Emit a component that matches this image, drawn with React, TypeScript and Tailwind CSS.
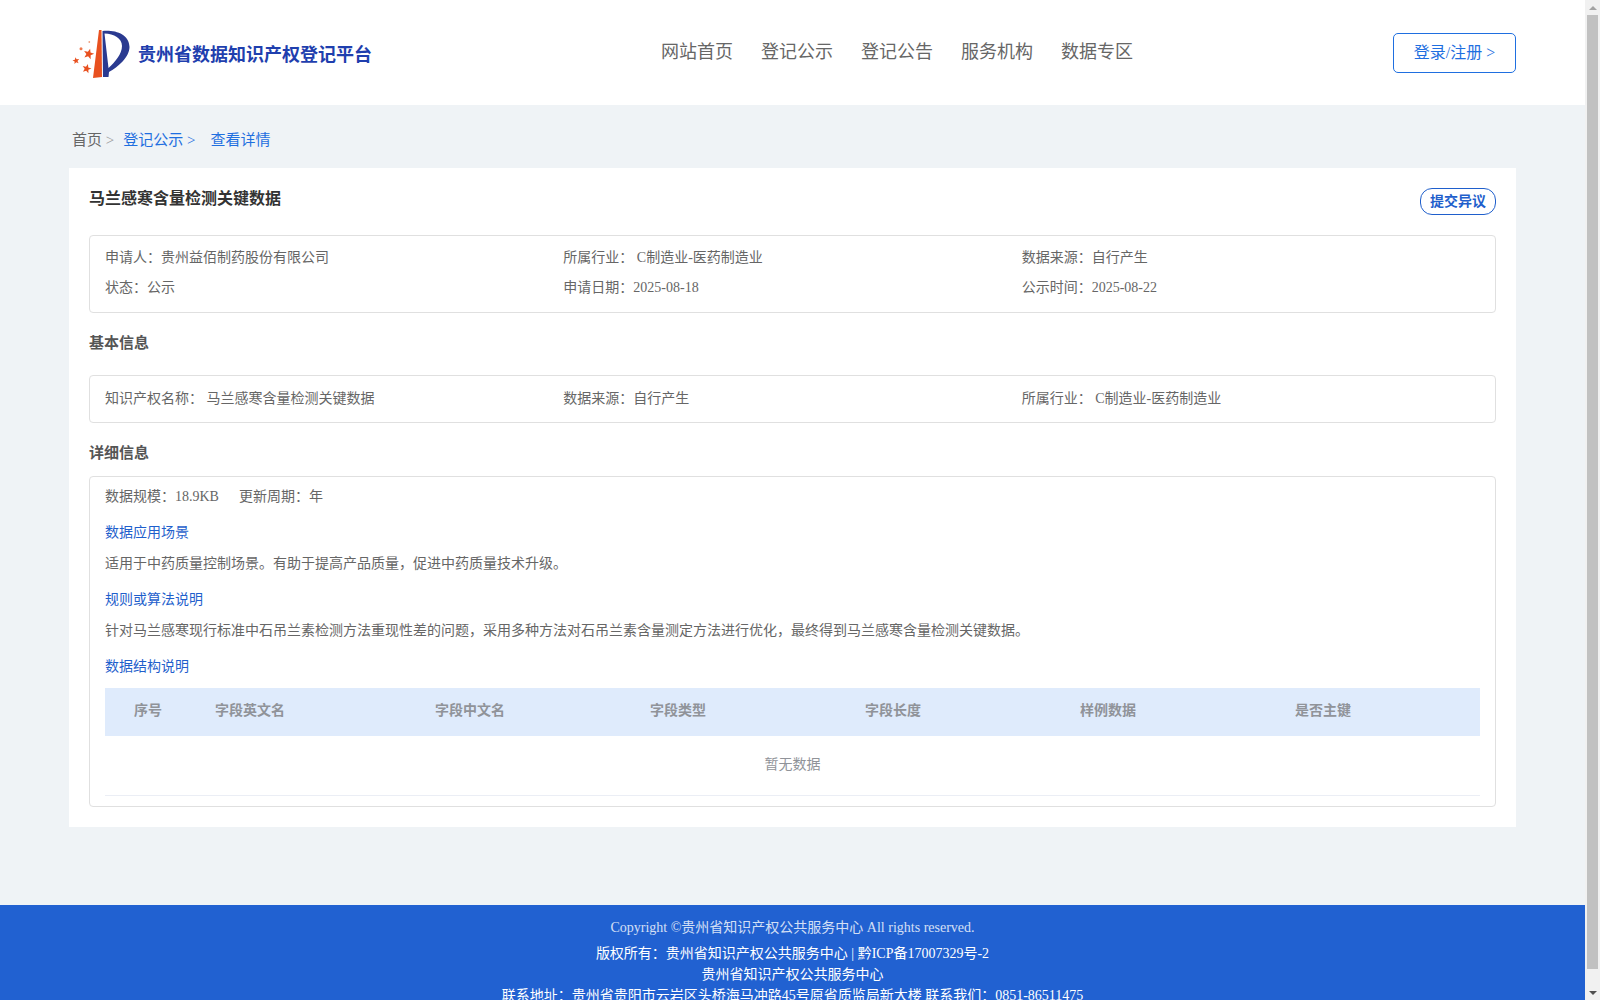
const navItems = ["网站首页", "登记公示", "登记公告", "服务机构", "数据专区"];
const tableColumns = ["字段英文名", "字段中文名", "字段类型", "字段长度", "样例数据", "是否主键"];

function starPoints(cx: number, cy: number, r: number, tilt: number) {
  const pts: string[] = [];
  for (let i = 0; i < 10; i++) {
    const radius = i % 2 === 0 ? r : r * 0.42;
    const a = ((-90 + tilt + i * 36) * Math.PI) / 180;
    pts.push(`${(cx + radius * Math.cos(a)).toFixed(2)},${(cy + radius * Math.sin(a)).toFixed(2)}`);
  }
  return pts.join(" ");
}

function Logo() {
  return (
    <svg width="70" height="60" viewBox="0 0 70 60" className="shrink-0">
      <path d="M33 7 L35.5 7 L36 54 L27 55 Z" fill="#e8501f" />
      <path
        fillRule="evenodd"
        d="M36.5 8 C50 7 63 11 63.5 24 C63.5 34 52 44 43 49 L42.5 54 L37 54 Z M38.5 10.5 C48 11 56 15 56 23 C56 31 49 39 42.5 45 Z"
        fill="#2a3a90"
      />
      <polygon points={starPoints(22.7, 31, 5.5, 15)} fill="#e8501f" />
      <polygon points={starPoints(10, 37.7, 3.6, -10)} fill="#e8501f" />
      <polygon points={starPoints(20.7, 45.7, 4.8, 15)} fill="#e8501f" />
      <circle cx="15" cy="25.7" r="1.5" fill="#ef7a50" />
      <circle cx="23.3" cy="19" r="0.9" fill="#f0a080" />
    </svg>
  );
}

function Field({ label, value }: { label: string; value: string }) {
  return (
    <div className="text-sm text-[#666]">
      {label}：{value}
    </div>
  );
}

function Scrollbar() {
  return (
    <div className="flex w-[15px] shrink-0 flex-col items-center bg-[#f1f1f1]">
      <div className="flex h-[15px] items-center justify-center">
        <div className="h-0 w-0 border-x-[4px] border-b-[4px] border-x-transparent border-b-[#a3a3a3]" />
      </div>
      <div className="h-[954px] w-[11px] bg-[#c1c1c1]" />
      <div className="mt-auto flex h-[15px] items-center justify-center">
        <div className="h-0 w-0 border-x-[4px] border-t-[4px] border-x-transparent border-t-[#505050]" />
      </div>
    </div>
  );
}

export default function App() {
  return (
    <div className="flex h-screen overflow-hidden bg-[#eff3f6] font-['Liberation_Serif','Noto_Sans_CJK_SC',serif] text-[#666]">
      <div className="w-[1585px] shrink-0 overflow-hidden">
        <header className="flex h-[105px] items-center bg-white pl-[66px] pr-[69px]">
          <div className="flex w-[526px] items-center gap-[2px]">
            <Logo />
            <span className="pt-[4px] text-lg font-bold text-[#1f3fae]">贵州省数据知识产权登记平台</span>
          </div>
          <nav className="ml-[69px] flex gap-[28px] pb-[2px] text-lg text-[#666]">
            {navItems.map((item) => (
              <a key={item}>{item}</a>
            ))}
          </nav>
          <button className="ml-auto h-10 w-[123px] rounded-[5px] border border-[#1f6fe0] text-base text-[#1f6fe0]">
            登录/注册 &gt;
          </button>
        </header>

        <div className="flex h-[63px] items-center pl-[72px] pt-[8px] text-[15px]">
          <span>首页 <span className="text-[#999]">&gt;</span></span>
          <span className="ml-[9px] text-[#1f6fe0]">登记公示 &gt;</span>
          <span className="ml-[15px] text-[#1f6fe0]">查看详情</span>
        </div>

        <main className="mx-[69px] h-[659px] bg-white px-[20px] pt-[20px]">
          <div className="flex h-[47px] items-start justify-between">
            <h1 className="text-base leading-[22px] font-bold text-[#333]">马兰感寒含量检测关键数据</h1>
            <button className="h-[27px] w-[76px] rounded-[12px] border border-[#1f5fcc] text-sm font-bold text-[#1f5fcc]">
              提交异议
            </button>
          </div>

          <div className="grid h-[78px] grid-cols-3 content-center gap-y-[10px] rounded border border-[#e0e0e0] px-[15px] pb-[2px] leading-5">
            <Field label="申请人" value="贵州益佰制药股份有限公司" />
            <Field label="所属行业" value=" C制造业-医药制造业" />
            <Field label="数据来源" value="自行产生" />
            <Field label="状态" value="公示" />
            <Field label="申请日期" value="2025-08-18" />
            <Field label="公示时间" value="2025-08-22" />
          </div>

          <h2 className="flex h-[62px] items-center pb-[2px] text-[15px] font-bold text-[#555]">基本信息</h2>

          <div className="grid h-[48px] grid-cols-3 items-center rounded border border-[#e0e0e0] px-[15px]">
            <Field label="知识产权名称" value=" 马兰感寒含量检测关键数据" />
            <Field label="数据来源" value="自行产生" />
            <Field label="所属行业" value=" C制造业-医药制造业" />
          </div>

          <h2 className="flex h-[53px] items-center pt-[7px] text-[15px] font-bold text-[#555]">详细信息</h2>

          <div className="h-[331px] rounded border border-[#e0e0e0] px-[15px] text-sm leading-5">
            <div className="flex gap-5 pt-[10px]">
              <span>数据规模：18.9KB</span>
              <span>更新周期：年</span>
            </div>
            <p className="mt-[16px] text-[#1f5fcc]">数据应用场景</p>
            <p className="mt-[11px]">适用于中药质量控制场景。有助于提高产品质量，促进中药质量技术升级。</p>
            <p className="mt-[16px] text-[#1f5fcc]">规则或算法说明</p>
            <p className="mt-[11px]">
              针对马兰感寒现行标准中石吊兰素检测方法重现性差的问题，采用多种方法对石吊兰素含量测定方法进行优化，最终得到马兰感寒含量检测关键数据。
            </p>
            <p className="mt-[16px] text-[#1f5fcc]">数据结构说明</p>
            <div className="mt-[11px] grid h-12 grid-cols-[90px_220px_215px_215px_215px_215px_1fr] items-center bg-[#dfebfc] pb-[2px] font-bold text-[#909399]">
              <div className="pr-[4px] text-center">序号</div>
              {tableColumns.map((col) => (
                <div key={col} className="px-5">{col}</div>
              ))}
            </div>
            <div className="flex h-[60px] items-center justify-center border-b border-[#ebeef5] pb-[2px] text-[#909399]">暂无数据</div>
          </div>
        </main>

        <footer className="mt-[78px] bg-[#2161d1] pt-[12px] pb-[30px] text-center text-sm leading-[21px] text-white">
          <p className="mb-[5px] opacity-80">Copyright ©贵州省知识产权公共服务中心 All rights reserved.</p>
          <p>版权所有：贵州省知识产权公共服务中心 | 黔ICP备17007329号-2</p>
          <p>贵州省知识产权公共服务中心</p>
          <p>联系地址：贵州省贵阳市云岩区头桥海马冲路45号原省质监局新大楼 联系我们：0851-86511475</p>
        </footer>
      </div>
      <Scrollbar />
    </div>
  );
}
